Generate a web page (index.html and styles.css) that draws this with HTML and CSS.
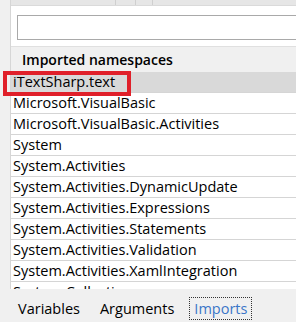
FILE: index.html
```html
<!DOCTYPE html>
<html lang="en">
<head>
  <meta charset="UTF-8">
  <title>Imports</title>
  <link rel="stylesheet" href="styles.css">
</head>
<body>
  <div class="panel">
    <div class="side"></div>
    <div class="main">
      <!-- top header strip with column dividers -->
      <div class="topbar">
        <span class="col c1"></span>
        <span class="col c2"></span>
        <span class="col c3"></span>
      </div>

      <div class="search">
        <input type="text" class="search-box">
      </div>

      <div class="grid-head">Imported namespaces</div>

      <div class="rows">
        <div class="row selected">iTextSharp.text</div>
        <div class="row">Microsoft.VisualBasic</div>
        <div class="row">Microsoft.VisualBasic.Activities</div>
        <div class="row">System</div>
        <div class="row">System.Activities</div>
        <div class="row">System.Activities.DynamicUpdate</div>
        <div class="row">System.Activities.Expressions</div>
        <div class="row">System.Activities.Statements</div>
        <div class="row">System.Activities.Validation</div>
        <div class="row">System.Activities.XamlIntegration</div>
        <div class="row">System.Collections</div>
      </div>
    </div>
  </div>

  <div class="tabs">
    <span class="tab">Variables</span>
    <span class="tab">Arguments</span>
    <span class="tab active">Imports</span>
  </div>
</body>
</html>
```

FILE: styles.css
```css
body {
  margin: 0;
  width: 296px;
  height: 322px;
  overflow: hidden;
  font-family: "Open Sans", "Noto Sans", sans-serif;
  font-size: 14.5px;
  color: #000;
  background: #f0f0f0;
  display: flex;
  flex-direction: column;
}
.panel {
  display: flex;
  height: 289px;
  flex: none;
  overflow: hidden;
}
.side {
  width: 10px;
  flex: none;
  background: #f0f0f0;
  border-right: 1px solid #d6d6d6;
}
.main {
  flex: 1;
  background: #fff;
  display: flex;
  flex-direction: column;
  min-width: 0;
}
.topbar {
  height: 5px;
  background: #e6e6e6;
  border-bottom: 1px solid #dadada;
  position: relative;
  flex: none;
}
.col {
  position: absolute;
  top: 0;
  bottom: 0;
  width: 1px;
  background: #cfcfcf;
}
.c1 { left: 104px; }
.c2 { left: 124px; }
.c3 { left: 141px; }

.search {
  height: 40px;
  padding: 9px 0 0 6px;
  box-sizing: border-box;
  flex: none;
}
.search-box {
  display: block;
  width: 100%;
  height: 25px;
  box-sizing: border-box;
  margin: 0;
  border: 1px solid #a9a9a9;
  border-right: none;
  background: #fff;
  outline: none;
}
.grid-head {
  height: 25px;
  flex: none;
  background: #f0f0f0;
  border-top: 1px solid #e0e0e0;
  padding-left: 11px;
  font-size: 14px;
  font-weight: 600;
  line-height: 25px;
}
.rows {
  display: flex;
  flex-direction: column;
}
.row {
  height: 20px;
  line-height: 20px;
  flex: none;
  border-bottom: 1px solid #d5d5d5;
  padding-left: 2px;
  white-space: nowrap;
}
.row.selected {
  background: #d9d9d9;
  position: relative;
}
/* red highlight box drawn over the selected row */
.row.selected::before {
  content: "";
  position: absolute;
  left: -8px;
  top: -1px;
  width: 120px;
  height: 17px;
  border: 4px solid #e0202a;
}

.tabs {
  flex: 1;
  display: flex;
  align-items: flex-start;
  gap: 10px;
  padding: 8px 0 0 13px;
  background: #f0f0f0;
}
.tab {
  padding: 1px 4px;
  line-height: 19px;
  border: 1px dotted transparent;
}
.tab.active {
  color: #3a76c8;
  border-color: #333;
}
```
